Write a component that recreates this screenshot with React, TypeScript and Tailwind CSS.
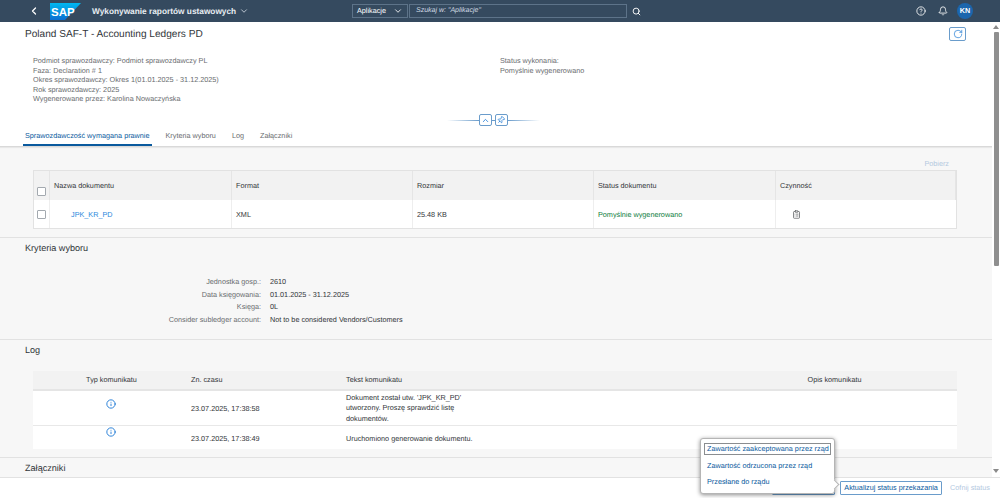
import { Bell, ChevronDown, ChevronLeft, ChevronUp, CircleHelp, Info, Pin, RotateCw, Search, ClipboardList } from "lucide-react";

const headerInfo = [
  "Podmiot sprawozdawczy: Podmiot sprawozdawczy PL",
  "Faza: Declaration # 1",
  "Okres sprawozdawczy: Okres 1(01.01.2025 - 31.12.2025)",
  "Rok sprawozdawczy: 2025",
  "Wygenerowane przez: Karolina Nowaczyńska",
];

const tabs = ["Sprawozdawczość wymagana prawnie", "Kryteria wyboru", "Log", "Załączniki"];

const criteria = [
  ["Jednostka gosp.:", "2610"],
  ["Data księgowania:", "01.01.2025 - 31.12.2025"],
  ["Księga:", "0L"],
  ["Consider subledger account:", "Not to be considered Vendors/Customers"],
];

const Checkbox = () => (
  <span className="block h-[9px] w-[9px] rounded-[1px] border border-[#a3a9af] bg-white" />
);

const SapLogo = () => (
  <svg width="31" height="17" viewBox="0 0 31 17" className="shrink-0">
    <defs>
      <linearGradient id="sapGrad" x1="0" y1="0" x2="0" y2="1">
        <stop offset="0" stopColor="#00b8f1" />
        <stop offset="1" stopColor="#0a6ed1" />
      </linearGradient>
    </defs>
    <polygon points="0,0 31,0 15,17 0,17" fill="url(#sapGrad)" />
    <text x="1" y="13" fontSize="11.5" fontWeight="700" fill="#fff" fontFamily="Liberation Sans, sans-serif">SAP</text>
  </svg>
);

export default function App() {
  return (
    <div className="relative flex h-[498px] w-[1000px] flex-col overflow-hidden bg-white font-['Liberation_Sans',sans-serif] text-[7.25px] text-[#32363a] [text-rendering:geometricPrecision]">
      {/* shell bar */}
      <header className="flex h-[22px] shrink-0 items-center bg-[#354a5f] pr-[27px] text-white">
        <div className="flex w-[352px] shrink-0 items-center">
          <ChevronLeft size={12} strokeWidth={2.5} className="ml-[28px]" />
          <span className="ml-[10px]"><SapLogo /></span>
          <span className="ml-[11px] text-[8.3px] font-bold text-[#e8edf2]">Wykonywanie raportów ustawowych</span>
          <ChevronDown size={10} className="ml-[3px] text-[#d1dae3]" />
        </div>
        <div className="flex h-[14px] w-[56px] items-center justify-between border border-[#5d7389] px-[4px] text-[7.25px]">
          Aplikacje
          <ChevronDown size={10} />
        </div>
        <div className="ml-[1px] flex h-[14px] w-[218px] items-center border border-[#5d7389] px-[6px] text-[7px] italic text-[#d1dae3]">
          Szukaj w: "Aplikacje"
        </div>
        <Search size={9} strokeWidth={2.5} className="ml-[5px]" />
        <CircleHelp size={10} className="ml-auto" />
        <Bell size={10} className="ml-[12px]" />
        <span className="ml-[9px] flex h-[16px] w-[16px] items-center justify-center rounded-full bg-[#1b66ad] text-[7.25px] font-bold">KN</span>
      </header>

      <div className="flex min-h-0 flex-1">
        <main className="flex min-w-0 flex-1 flex-col bg-[#f7f7f7]">
          {/* object header */}
          <section className="h-[125px] shrink-0 border-b border-[#d9d9d9] bg-white shadow-[0_1px_1px_rgba(0,0,0,0.06)]">
            <div className="flex items-start justify-between pl-[25px] pr-[26px] pt-[5px]">
              <h1 className="pt-[1px] text-[10.1px] leading-[14px] text-[#32363a]">Poland SAF-T - Accounting Ledgers PD</h1>
              <button className="flex h-[14px] w-[17px] items-center justify-center rounded-[2px] border border-[#6a9ccb] text-[#0a6ed1]">
                <RotateCw size={10} strokeWidth={1.5} />
              </button>
            </div>
            <div className="mt-[14px] flex h-[49px] pl-[33px] text-[#6a6d70]">
              <div className="w-[467px] leading-[9.5px]">
                {headerInfo.map((line) => <p key={line}>{line}</p>)}
              </div>
              <div className="leading-[10px]">
                <p>Status wykonania:</p>
                <p>Pomyślnie wygenerowano</p>
              </div>
            </div>
            <div className="mt-[9px] flex items-center justify-center gap-0 pr-[6px]">
              <span className="h-px w-[32px] bg-gradient-to-r from-transparent to-[#6a9ccb]" />
              <button className="flex h-[12px] w-[13px] items-center justify-center rounded-[2px] border border-[#6a9ccb] text-[#0a6ed1]">
                <ChevronUp size={9} />
              </button>
              <span className="h-px w-[3px] bg-[#6a9ccb]" />
              <button className="flex h-[12px] w-[13px] items-center justify-center rounded-[2px] border border-[#6a9ccb] text-[#0a6ed1]">
                <Pin size={8} className="rotate-45" />
              </button>
              <span className="h-px w-[32px] bg-gradient-to-l from-transparent to-[#6a9ccb]" />
            </div>
            <nav className="mt-[5px] flex gap-[16px] pl-[25px] leading-[10px]">
              {tabs.map((tab, i) => (
                <span
                  key={tab}
                  className={i === 0 ? "-mx-[2px] border-b-2 border-[#0a5a9e] px-[2px] pb-[3px] text-[#0a5a9e]" : "pb-[3px] text-[#6a6d70]"}
                >
                  {tab}
                </span>
              ))}
            </nav>
          </section>

          {/* documents */}
          <section className="h-[91px] shrink-0 border-b border-[#e2e2e2] pl-[33px] pr-[35px]">
            <p className="pr-[8px] pt-[11px] pb-[1px] text-right leading-[11px] text-[#b4c9df]">Pobierz</p>
            <div className="grid grid-cols-[16px_182px_181px_181px_182px_1fr] border border-[#e2e2e2] bg-white">
              <div className="flex h-[29px] items-end justify-center border-r border-[#e5e5e5] bg-[#f2f2f2] pb-[4px]"><Checkbox /></div>
              {["Nazwa dokumentu", "Format", "Rozmiar", "Status dokumentu", "Czynność"].map((h) => (
                <div key={h} className="flex h-[29px] items-center border-r border-[#e5e5e5] bg-[#f2f2f2] pl-[4px] pt-[1px] last:border-r-0">{h}</div>
              ))}
              <div className="flex h-[28px] items-center justify-center border-r border-[#eeeeee] pt-[1px]"><Checkbox /></div>
              <div className="flex items-center border-r border-[#eeeeee] pl-[21px] pt-[2px] text-[#2a87dc]">JPK_KR_PD</div>
              <div className="flex items-center border-r border-[#eeeeee] pl-[4px] pt-[2px]">XML</div>
              <div className="flex items-center border-r border-[#eeeeee] pl-[4px] pt-[2px]">25.48 KB</div>
              <div className="flex items-center border-r border-[#eeeeee] pl-[4px] pt-[2px] text-[#107e3e]">Pomyślnie wygenerowano</div>
              <div className="flex items-center pl-[16px] text-[#5c5f62]"><ClipboardList size={9} /></div>
            </div>
          </section>

          {/* selection criteria */}
          <section className="h-[102px] shrink-0 border-b border-[#e2e2e2] pl-[25px]">
            <h2 className="pt-[4px] text-[9.1px] leading-[13px]">Kryteria wyboru</h2>
            <dl className="mt-[21px] grid grid-cols-[236px_1fr] gap-x-[9px] leading-[12.5px]">
              {criteria.map(([label, value]) => (
                <div key={label} className="contents">
                  <dt className="text-right text-[#6a6d70]">{label}</dt>
                  <dd>{value}</dd>
                </div>
              ))}
            </dl>
          </section>

          {/* log */}
          <section className="h-[118px] shrink-0 border-b border-[#e2e2e2] pl-[33px] pr-[35px]">
            <h2 className="-ml-[8px] pt-[4px] text-[9.1px] leading-[13px]">Log</h2>
            <div className="mt-[14px] grid grid-cols-[156px_154px_369px_1fr] bg-white">
              <div className="flex h-[20px] items-center justify-center border-b-2 border-[#e5e5e5] bg-[#f2f2f2] pl-[1px] pt-[1px]">Typ komunikatu</div>
              <div className="flex items-center border-b-2 border-[#e5e5e5] bg-[#f2f2f2] pl-[2px] pt-[1px]">Zn. czasu</div>
              <div className="flex items-center border-b-2 border-[#e5e5e5] bg-[#f2f2f2] pl-[3px] pt-[1px]">Tekst komunikatu</div>
              <div className="flex items-center justify-center border-b-2 border-[#e5e5e5] bg-[#f2f2f2] pt-[1px]">Opis komunikatu</div>

              <div className="flex h-[35px] justify-center border-b border-[#e8e8e8] pt-[8px] text-[#0a6ed1]"><Info size={10} /></div>
              <div className="flex items-center border-b border-[#e8e8e8] pl-[2px] pt-[2px]">23.07.2025, 17:38:58</div>
              <div className="flex items-center border-b border-[#e8e8e8] pl-[3px] pt-[1px] leading-[10.5px]"><p className="w-[120px]">Dokument został utw. 'JPK_KR_PD' utworzony. Proszę sprawdzić listę dokumentów.</p></div>
              <div className="border-b border-[#e8e8e8]" />

              <div className="flex h-[23px] justify-center pt-[1px] text-[#0a6ed1]"><Info size={10} /></div>
              <div className="flex items-center pl-[2px] pt-[3px]">23.07.2025, 17:38:49</div>
              <div className="flex items-center pl-[3px] pt-[3px]">Uruchomiono generowanie dokumentu.</div>
              <div />
            </div>
          </section>

          <section className="flex-1 pl-[25px]">
            <h2 className="pt-[4px] text-[9.1px] leading-[13px]">Załączniki</h2>
          </section>
        </main>

        {/* scrollbar */}
        <div className="flex w-[8px] shrink-0 flex-col items-center bg-white pt-[3px]">
          <span className="mb-[3px] h-0 w-0 border-x-[3px] border-b-[4px] border-x-transparent border-b-[#8a8a8a]" />
          <span className="h-[234px] w-[5px] rounded-[1px] bg-[#8f8f8f]" />
          <span className="mt-auto mb-[4px] h-0 w-0 border-x-[3px] border-t-[4px] border-x-transparent border-t-[#8a8a8a]" />
        </div>
      </div>

      {/* footer */}
      <footer className="flex h-[21px] shrink-0 items-center justify-end border-t border-[#e2e2e2] bg-white pr-[10px]">
        <span className="mr-[5px] h-[14px] w-[63px] rounded-[1px] border border-[#6a9ccb]" />
        <button className="mr-[8px] flex h-[14px] w-[102px] items-center justify-center rounded-[1px] border border-[#6a9ccb] pt-[1px] text-[#0a5a9e]">Aktualizuj status przekazania</button>
        <span className="pt-[1px] text-[#b4c9df]">Cofnij status</span>
      </footer>

      {/* status menu */}
      <div className="absolute left-[700px] top-[438px] h-[56px] w-[135px] rounded-[3px] border border-[#b5b5b5] bg-white px-[3px] pt-[4px] text-[#0a5a9e] shadow-[0_1px_4px_rgba(0,0,0,0.45)]">
        <p className="flex h-[12px] items-center whitespace-nowrap border border-[#8a8d90] px-[2px]">Zawartość zaakceptowana przez rząd</p>
        <p className="mt-[5px] flex h-[12px] items-center whitespace-nowrap px-[3px]">Zawartość odrzucona przez rząd</p>
        <p className="mt-[4px] flex h-[12px] items-center whitespace-nowrap px-[3px]">Przesłane do rządu</p>
        <span className="absolute -right-[4px] bottom-[5px] h-[7px] w-[7px] rotate-45 border-r border-t border-[#b5b5b5] bg-white" />
      </div>
    </div>
  );
}
